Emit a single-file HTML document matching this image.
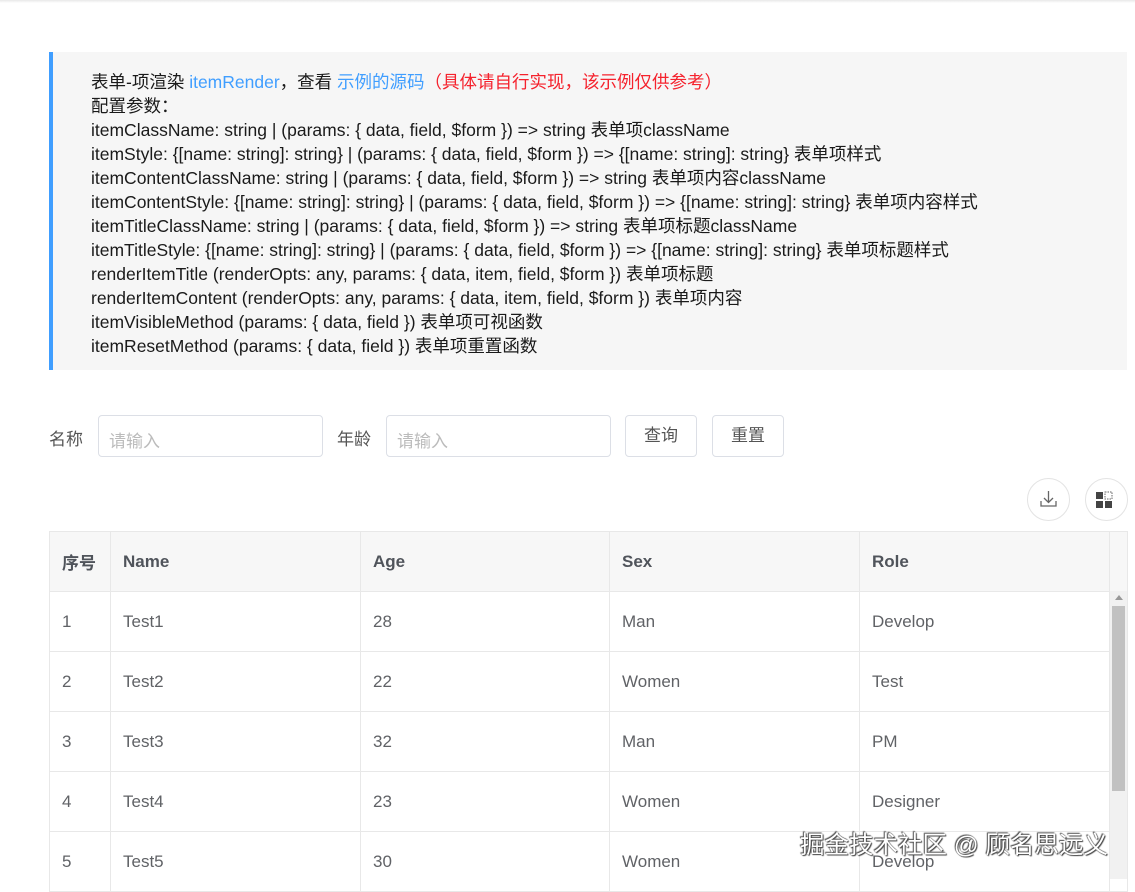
<!DOCTYPE html>
<html><head><meta charset="utf-8"><style>
*{box-sizing:border-box;margin:0;padding:0}
body{width:1135px;height:879px;overflow:hidden;background:#fff;font-family:"Liberation Sans","Noto Sans CJK SC",sans-serif;color:#222;position:relative}
.top{position:absolute;left:0;top:0;width:1135px;height:3px;background:linear-gradient(#e8e8e8,#fff)}
.tip{position:absolute;left:49px;top:52px;width:1078px;height:318px;background:#f6f6f6;border-left:4px solid #409eff;padding:18px 0 0 38px;font-size:17.5px;line-height:24px;color:#1a1a1a;white-space:nowrap}
.b{color:#409eff}.r{color:#f5222d}
.lbl{position:absolute;top:425px;font-size:17px;color:#555}
.in{position:absolute;top:415px;width:225px;height:42px;border:1px solid #dcdfe6;border-radius:4px;font-size:17px;color:#bbb;padding:11px 10px}
.btn{position:absolute;top:415px;width:72px;height:42px;border:1px solid #dcdfe6;border-radius:4px;font-size:17px;color:#555;text-align:center;line-height:40px}
.circ{position:absolute;top:478px;width:43px;height:43px;border:1px solid #e3e3e3;border-radius:50%}
table{position:absolute;left:49px;top:531px;border-collapse:collapse;font-size:17px;color:#606266}
td,th{border:1px solid #e8e8e8;height:60px;padding:0 12px;text-align:left}
th{background:#f7f7f7;color:#50545b;font-weight:bold}
.sb{position:absolute;left:1109px;top:591px;width:18px;height:288px;background:#f1f1f1;border-left:1px solid #e8e8e8}
.wm{position:absolute;left:800px;top:826px;font-size:24.5px;color:#fff;text-shadow:0 0 1px #333,1px 1px 1px #444,-1px -1px 1px #555}
</style></head><body>
<div class="top"></div>
<div class="tip">表单-项渲染 <span class="b">itemRender</span>，查看 <span class="b">示例的源码</span><span class="r">（具体请自行实现，该示例仅供参考）</span><br>配置参数：<br>itemClassName: string | (params: { data, field, $form }) =&gt; string 表单项className<br>itemStyle: {[name: string]: string} | (params: { data, field, $form }) =&gt; {[name: string]: string} 表单项样式<br>itemContentClassName: string | (params: { data, field, $form }) =&gt; string 表单项内容className<br>itemContentStyle: {[name: string]: string} | (params: { data, field, $form }) =&gt; {[name: string]: string} 表单项内容样式<br>itemTitleClassName: string | (params: { data, field, $form }) =&gt; string 表单项标题className<br>itemTitleStyle: {[name: string]: string} | (params: { data, field, $form }) =&gt; {[name: string]: string} 表单项标题样式<br>renderItemTitle (renderOpts: any, params: { data, item, field, $form }) 表单项标题<br>renderItemContent (renderOpts: any, params: { data, item, field, $form }) 表单项内容<br>itemVisibleMethod (params: { data, field }) 表单项可视函数<br>itemResetMethod (params: { data, field }) 表单项重置函数</div>
<div class="lbl" style="left:49px">名称</div>
<div class="in" style="left:98px">请输入</div>
<div class="lbl" style="left:337px">年龄</div>
<div class="in" style="left:386px">请输入</div>
<div class="btn" style="left:625px">查询</div>
<div class="btn" style="left:712px">重置</div>
<div class="circ" style="left:1027px"><svg width="43" height="43" viewBox="0 0 43 43"><path d="M20.5 12v11M16 19l4.5 4.5L25 19M13 22v5h15v-5" fill="none" stroke="#666" stroke-width="1.3"/></svg></div>
<div class="circ" style="left:1085px"><svg width="43" height="43" viewBox="0 0 43 43"><rect x="10" y="13" width="7" height="7" fill="#444"/><rect x="19" y="13" width="7" height="7" fill="none" stroke="#666" stroke-dasharray="1.5 1"/><rect x="10" y="22" width="7" height="7" fill="#444"/><rect x="19" y="22" width="7" height="7" fill="#444"/></svg></div>
<table>
<tr><th style="width:61px">序号</th><th style="width:250px">Name</th><th style="width:249px">Age</th><th style="width:250px">Sex</th><th style="width:250px">Role</th><th style="width:18px;padding:0"></th></tr>
<tr><td>1</td><td>Test1</td><td>28</td><td>Man</td><td>Develop</td><td style="padding:0"></td></tr>
<tr><td>2</td><td>Test2</td><td>22</td><td>Women</td><td>Test</td><td style="padding:0"></td></tr>
<tr><td>3</td><td>Test3</td><td>32</td><td>Man</td><td>PM</td><td style="padding:0"></td></tr>
<tr><td>4</td><td>Test4</td><td>23</td><td>Women</td><td>Designer</td><td style="padding:0"></td></tr>
<tr><td>5</td><td>Test5</td><td>30</td><td>Women</td><td>Develop</td><td style="padding:0"></td></tr>
</table>
<div class="sb"><div style="margin:4px auto 0;width:0;height:0;border-left:4px solid transparent;border-right:4px solid transparent;border-bottom:5px solid #999"></div><div style="margin:6px 2px 0;height:185px;background:#c1c1c1"></div></div>
<div class="wm">掘金技术社区 @ 顾名思远义</div>
</body></html>
